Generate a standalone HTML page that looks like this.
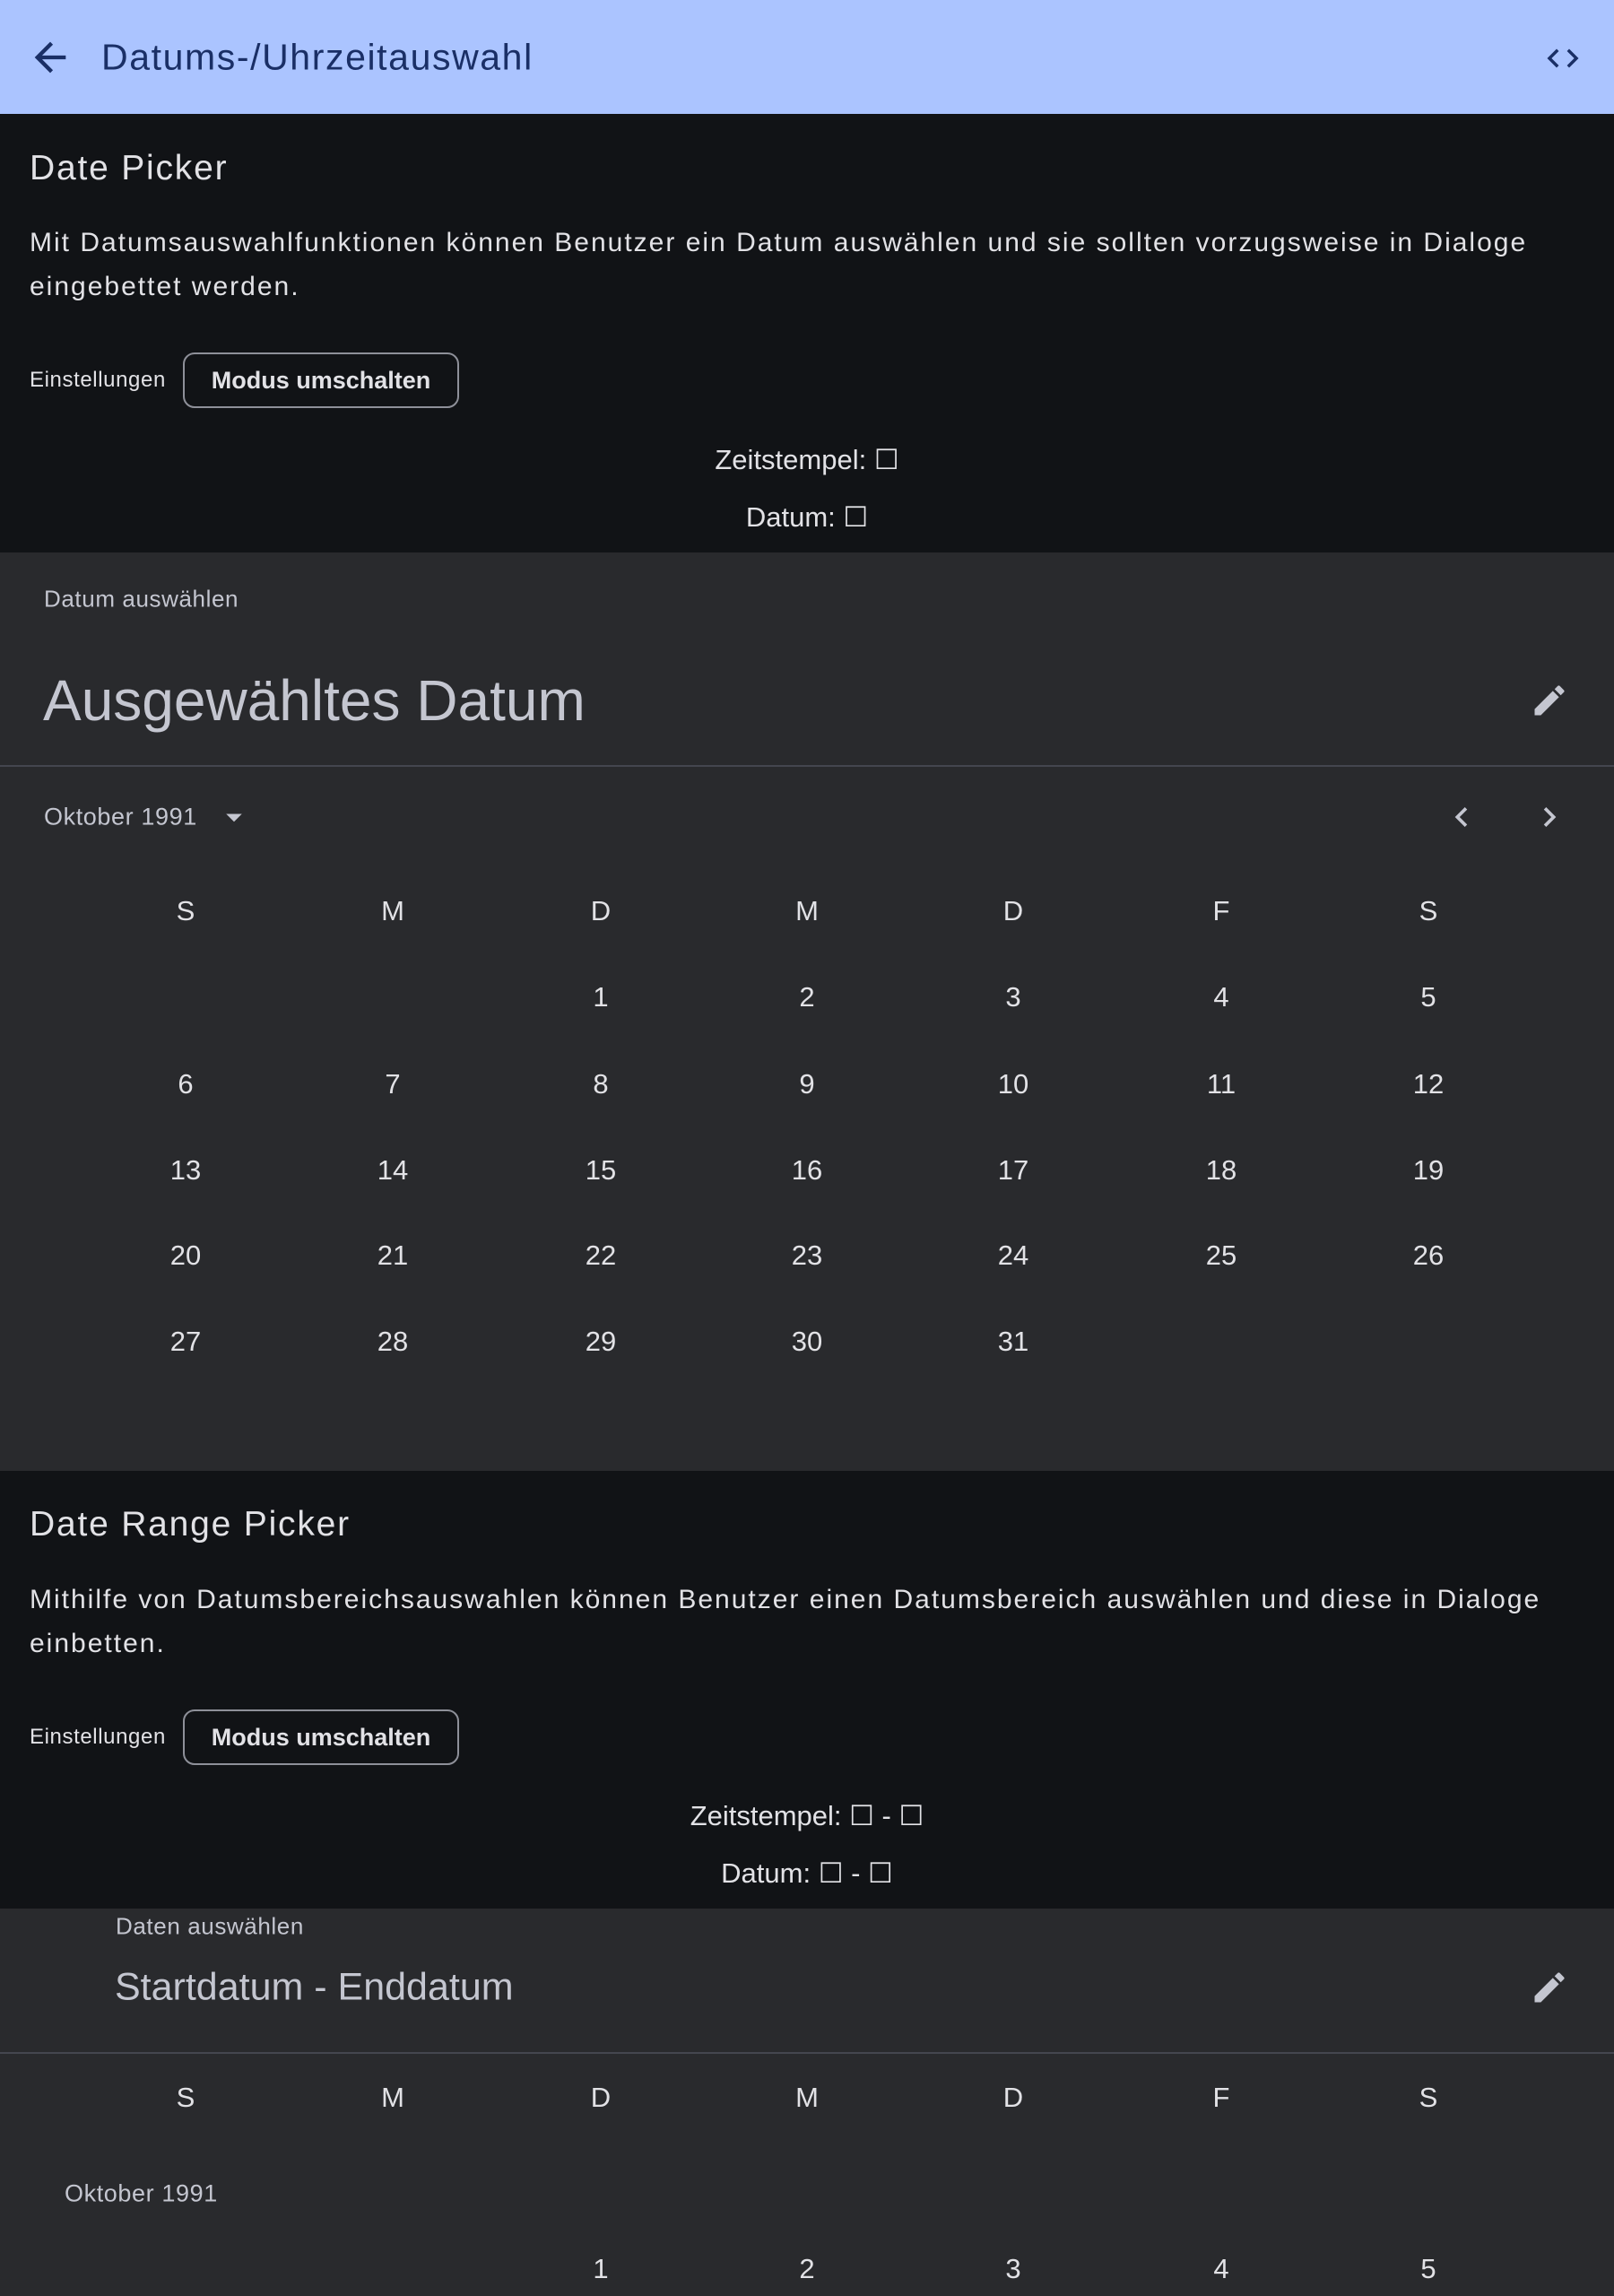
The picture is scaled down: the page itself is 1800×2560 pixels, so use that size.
<!DOCTYPE html>
<html><head><meta charset="utf-8"><style>
*{margin:0;padding:0;box-sizing:border-box}
body{width:1800px;height:2560px;overflow:hidden;background:#111316;font-family:"Liberation Sans",sans-serif;color:#e2e2e6;position:relative}
.a{position:absolute;white-space:nowrap}
.c{transform:translate(-50%,-50%)}
.v{transform:translateY(-50%)}
.bar{position:absolute;left:0;top:0;width:1800px;height:127px;background:#abc4ff}
.panel{position:absolute;left:0;width:1800px;background:#292a2d}
.btn{position:absolute;left:204px;width:308px;height:62px;border:2px solid #8e9099;border-radius:13px;color:#e2e2e6;font-size:27px;display:flex;align-items:center;justify-content:center;font-weight:bold}
.n{font-size:31px;color:#e2e2e6}
.p{font-size:30px;letter-spacing:2px}
</style></head><body>
<div class="bar"></div>
<svg class="a" style="left:30px;top:38px" width="52" height="52" viewBox="0 0 24 24"><path d="M20 11H7.83l5.59-5.59L12 4l-8 8 8 8 1.41-1.41L7.83 13H20v-2z" fill="#1a2f66"/></svg>
<div class="a v" style="left:113px;top:64px;font-size:41px;color:#1a2f66;letter-spacing:1.6px">Datums-/Uhrzeitauswahl</div>
<svg class="a" style="left:1722px;top:44px" width="42" height="42" viewBox="0 0 24 24"><path d="M9.4 16.6L4.8 12l4.6-4.6L8 6l-6 6 6 6 1.4-1.4zm5.2 0l4.6-4.6-4.6-4.6L16 6l6 6-6 6-1.4-1.4z" fill="#1a2f66"/></svg>

<div class="a v" style="left:33px;top:188px;font-size:39px;letter-spacing:1.8px">Date Picker</div>
<div class="a v p" style="left:33px;top:271px">Mit Datumsauswahlfunktionen können Benutzer ein Datum auswählen und sie sollten vorzugsweise in Dialoge</div>
<div class="a v p" style="left:33px;top:320px">eingebettet werden.</div>
<div class="a v" style="left:33px;top:424px;font-size:24px;letter-spacing:0.6px">Einstellungen</div>
<div class="btn" style="top:393px">Modus umschalten</div>
<div class="a c" style="left:900px;top:513px;font-size:31px">Zeitstempel: ☐</div>
<div class="a c" style="left:900px;top:577px;font-size:31px">Datum: ☐</div>

<div class="panel" style="top:616px;height:1024px"></div>
<div class="a v" style="left:49px;top:668px;font-size:26px;color:#c4c6d0;letter-spacing:0.6px">Datum auswählen</div>
<div class="a v" style="left:48px;top:781px;font-size:64px;color:#c4c6d0">Ausgewähltes Datum</div>
<svg class="a" style="left:1706px;top:759px" width="44" height="44" viewBox="0 0 24 24"><path d="M3 17.25V21h3.75L17.81 9.94l-3.75-3.75L3 17.25zM20.71 7.04a1 1 0 000-1.41l-2.34-2.34a1 1 0 00-1.41 0l-1.83 1.83 3.75 3.75 1.83-1.83z" fill="#c4c6d0"/></svg>
<div class="a" style="left:0;top:853px;width:1800px;height:2px;background:#44464f"></div>
<div class="a v" style="left:49px;top:911px;font-size:27px;color:#c4c6d0;letter-spacing:0.6px">Oktober 1991</div>
<svg class="a" style="left:240px;top:890px" width="42" height="42" viewBox="0 0 24 24"><path d="M7 10l5 5 5-5z" fill="#c4c6d0"/></svg>
<svg class="a" style="left:1608px;top:889px" width="44" height="44" viewBox="0 0 24 24"><path d="M15.41 7.41L14 6l-6 6 6 6 1.41-1.41L10.83 12z" fill="#c4c6d0"/></svg>
<svg class="a" style="left:1706px;top:889px" width="44" height="44" viewBox="0 0 24 24"><path d="M10 6L8.59 7.41 13.17 12l-4.58 4.59L10 18l6-6z" fill="#c4c6d0"/></svg>

<div class="a v" style="left:33px;top:1700px;font-size:39px;letter-spacing:1.8px">Date Range Picker</div>
<div class="a v p" style="left:33px;top:1784px">Mithilfe von Datumsbereichsauswahlen können Benutzer einen Datumsbereich auswählen und diese in Dialoge</div>
<div class="a v p" style="left:33px;top:1833px">einbetten.</div>
<div class="a v" style="left:33px;top:1937px;font-size:24px;letter-spacing:0.6px">Einstellungen</div>
<div class="btn" style="top:1906px">Modus umschalten</div>
<div class="a c" style="left:900px;top:2025px;font-size:31px">Zeitstempel: ☐ - ☐</div>
<div class="a c" style="left:900px;top:2089px;font-size:31px">Datum: ☐ - ☐</div>

<div class="panel" style="top:2128px;height:432px"></div>
<div class="a v" style="left:129px;top:2148px;font-size:26px;color:#c4c6d0;letter-spacing:0.6px">Daten auswählen</div>
<div class="a v" style="left:128px;top:2216px;font-size:43px;color:#c4c6d0">Startdatum - Enddatum</div>
<svg class="a" style="left:1706px;top:2194px" width="44" height="44" viewBox="0 0 24 24"><path d="M3 17.25V21h3.75L17.81 9.94l-3.75-3.75L3 17.25zM20.71 7.04a1 1 0 000-1.41l-2.34-2.34a1 1 0 00-1.41 0l-1.83 1.83 3.75 3.75 1.83-1.83z" fill="#c4c6d0"/></svg>
<div class="a" style="left:0;top:2288px;width:1800px;height:2px;background:#44464f"></div>
<div class="a v" style="left:72px;top:2446px;font-size:27px;color:#c4c6d0;letter-spacing:0.6px">Oktober 1991</div>

<script>
var xs=[207,438,670,900,1130,1362,1593],w=["S","M","D","M","D","F","S"];
function put(t,x,y){var d=document.createElement('div');d.className='a c n';d.style.left=x+'px';d.style.top=y+'px';d.textContent=t;document.body.appendChild(d);}
for(var i=0;i<7;i++){put(w[i],xs[i],1016);put(w[i],xs[i],2339);}
var ys=[1112,1209,1305,1400,1496],day=1;
for(var r=0;r<5;r++)for(var c=0;c<7;c++){if(r==0&&c<2)continue;if(day>31)break;put(day,xs[c],ys[r]);day++;}
for(var c=2;c<7;c++)put(c-1,xs[c],2530);
</script>
</body></html>
